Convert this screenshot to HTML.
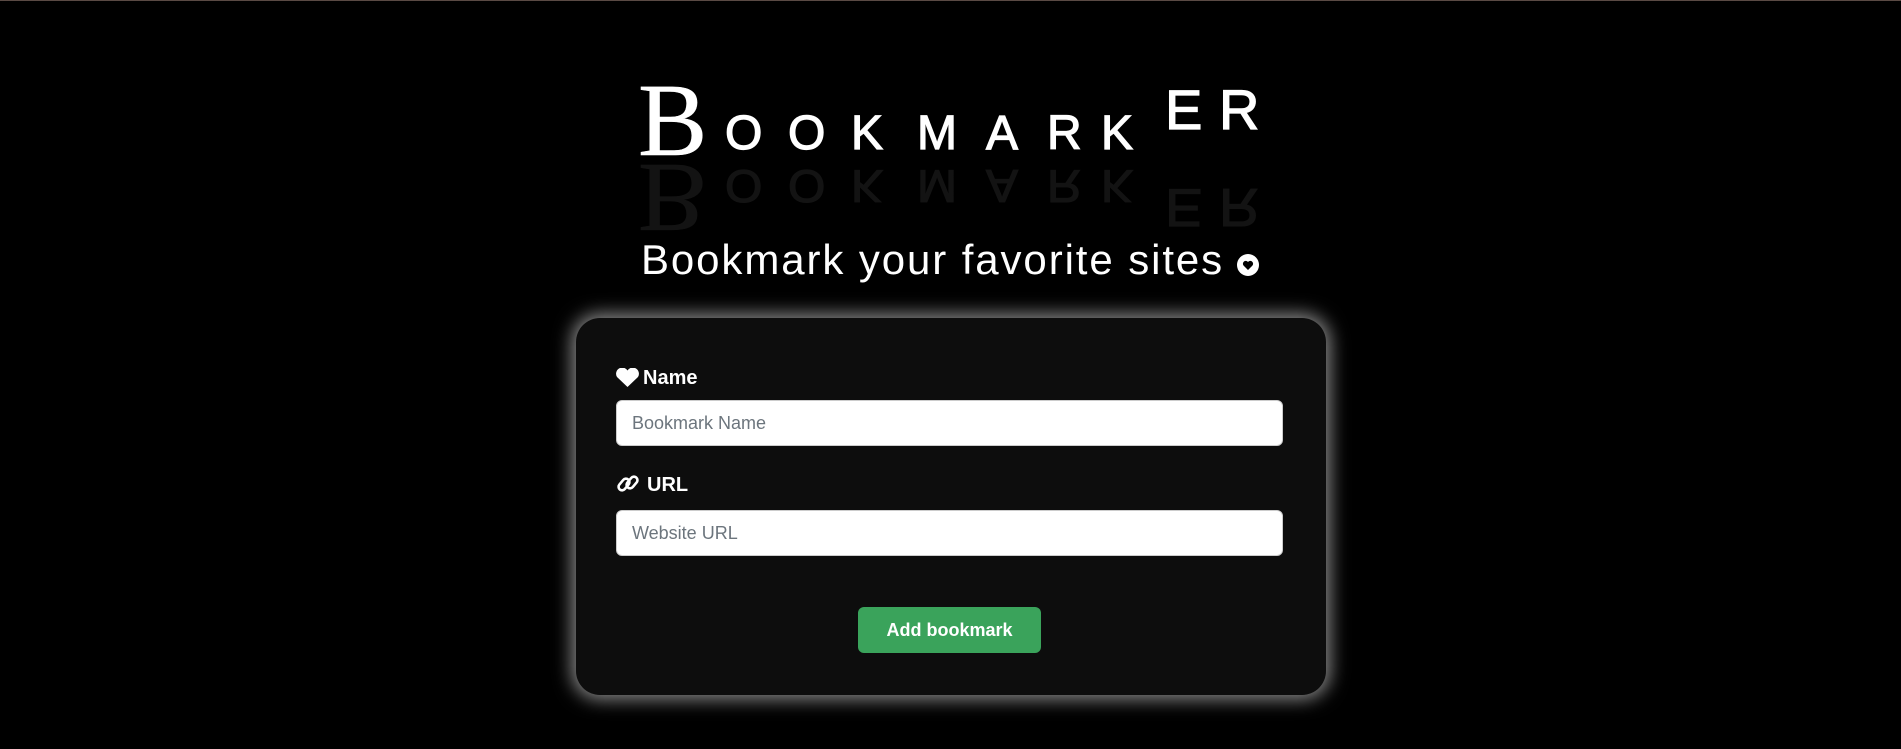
<!DOCTYPE html>
<html><head><meta charset="utf-8"><style>
html,body{margin:0;padding:0;background:#000;width:1901px;height:749px;overflow:hidden;font-family:"Liberation Sans",sans-serif;}
.topline{position:absolute;left:0;top:0;width:1901px;height:1px;background:#5a4a44;}
.l{position:absolute;color:#fff;line-height:1;-webkit-text-stroke:1.2px #fff;}
.s{font-family:"Liberation Sans",sans-serif;font-size:48px;}
.e{font-family:"Liberation Sans",sans-serif;font-size:56px;}
.b{font-family:"Liberation Serif",serif;font-size:104px;-webkit-text-stroke:0.5px #fff;}
.grp{position:absolute;left:0;top:0;width:1901px;height:300px;}
.refl{transform-origin:0 160px;transform:scaleY(-0.95);opacity:.075;}
.sub{position:absolute;left:641px;top:236px;color:#fff;font-size:42px;line-height:48px;white-space:nowrap;letter-spacing:1.9px;}
.card{position:absolute;left:576px;top:318px;width:750px;height:377px;background:#0d0d0d;border-radius:24px;box-shadow:0 0 18px 4px rgba(255,255,255,.55);}
.lab{position:absolute;color:#fff;font-weight:bold;font-size:20px;line-height:22px;}
.inp{position:absolute;left:40px;width:667px;height:46px;background:#fff;border:1px solid #ccc;border-radius:6px;box-sizing:border-box;color:#6c757d;font-size:18px;line-height:44px;padding-left:15px;}
.btn{position:absolute;left:282px;top:289px;width:183px;height:46px;background:#3aa35b;border-radius:6px;color:#fff;font-size:18px;font-weight:bold;text-align:center;line-height:46px;}
</style></head><body>
<div class="topline"></div>
<div class="grp">
<span class="l b" style="left:638px;top:69px">B</span>
<span class="l s" style="left:725px;top:110px">O</span>
<span class="l s" style="left:788px;top:110px">O</span>
<span class="l s" style="left:851px;top:110px">K</span>
<span class="l s" style="left:917px;top:110px">M</span>
<span class="l s" style="left:986px;top:110px">A</span>
<span class="l s" style="left:1047px;top:110px">R</span>
<span class="l s" style="left:1101px;top:110px">K</span>
<span class="l e" style="left:1165px;top:82px">E</span>
<span class="l e" style="left:1219px;top:82px">R</span>
</div>
<div class="grp refl">
<span class="l b" style="left:638px;top:69px">B</span>
<span class="l s" style="left:725px;top:110px">O</span>
<span class="l s" style="left:788px;top:110px">O</span>
<span class="l s" style="left:851px;top:110px">K</span>
<span class="l s" style="left:917px;top:110px">M</span>
<span class="l s" style="left:986px;top:110px">A</span>
<span class="l s" style="left:1047px;top:110px">R</span>
<span class="l s" style="left:1101px;top:110px">K</span>
<span class="l e" style="left:1165px;top:82px">E</span>
<span class="l e" style="left:1219px;top:82px">R</span>
</div>
<div class="sub">Bookmark your favorite sites</div>
<svg style="position:absolute;left:1236px;top:253px" width="24" height="24" viewBox="0 0 24 24"><circle cx="12" cy="12" r="11" fill="#fff"/><path d="M12 17 L7.5 12.5 A2.6 2.6 0 0 1 12 9 A2.6 2.6 0 0 1 16.5 12.5 Z" fill="#000"/></svg>
<div class="card">
 <svg style="position:absolute;left:39px;top:50px" width="25" height="19" viewBox="0 0 25 19"><path d="M12.5 19 L2 9 A5.5 5.5 0 0 1 12.5 2.5 A5.5 5.5 0 0 1 23 9 Z" fill="#fff"/></svg>
 <div class="lab" style="left:67px;top:49px">Name</div>
 <div class="inp" style="top:82px">Bookmark Name</div>
 <svg style="position:absolute;left:40px;top:155px" width="24" height="22" viewBox="0 0 24 22"><g fill="none" stroke="#fff" stroke-width="2.6"><rect x="1.5" y="8" width="13" height="7" rx="3.5" transform="rotate(-50 8 11.5)"/><rect x="9.5" y="6" width="13" height="7" rx="3.5" transform="rotate(-50 16 9.5)"/></g></svg>
 <div class="lab" style="left:71px;top:156px">URL</div>
 <div class="inp" style="top:192px">Website URL</div>
 <div class="btn">Add bookmark</div>
</div>
</body></html>
